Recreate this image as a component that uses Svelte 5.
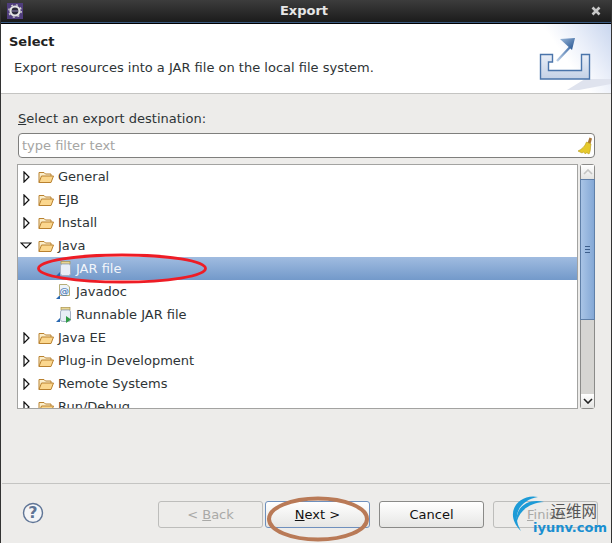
<script lang="ts">
  const nodes = [
    { label: "General", kind: "folder", arrow: "closed" },
    { label: "EJB", kind: "folder", arrow: "closed" },
    { label: "Install", kind: "folder", arrow: "closed" },
    { label: "Java", kind: "folder", arrow: "open" },
    { label: "JAR file", kind: "jar", selected: true },
    { label: "Javadoc", kind: "doc" },
    { label: "Runnable JAR file", kind: "run" },
    { label: "Java EE", kind: "folder", arrow: "closed" },
    { label: "Plug-in Development", kind: "folder", arrow: "closed" },
    { label: "Remote Systems", kind: "folder", arrow: "closed" },
    { label: "Run/Debug", kind: "folder", arrow: "closed" },
  ];
</script>

<div class="window">
  <div class="titlebar">
    <svg class="appicon" width="16" height="16" viewBox="0 0 16 16">
      <rect width="16" height="16" fill="#4f3d7c" />
      <circle cx="8" cy="8" r="4.5" fill="#2c2a3c" stroke="#e4e4e4" stroke-width="2.2" />
      <circle cx="8" cy="8" r="6.2" fill="none" stroke="#cfcfcf" stroke-width="1.4" stroke-dasharray="2 2.9" />
      <rect x="5" y="7.5" width="6" height="1" fill="#8a7fb0" />
    </svg>
    <span class="title">Export</span>
    <svg class="close" width="10" height="10" viewBox="0 0 10 10">
      <path d="M1.5 1.5 L8.5 8.5 M8.5 1.5 L1.5 8.5" stroke="#c8c8c8" stroke-width="2.6" />
    </svg>
  </div>

  <header class="banner">
    <div class="heading">
      <h1>Select</h1>
      <p>Export resources into a JAR file on the local file system.</p>
    </div>
    <div class="wizard">
      <svg width="72" height="69" viewBox="0 0 72 69">
        <defs>
          <linearGradient id="tray" x1="0" y1="0" x2="0" y2="1">
            <stop offset="0" stop-color="#e9eef7" />
            <stop offset="1" stop-color="#c4d1e6" />
          </linearGradient>
          <linearGradient id="shaft" x1="0" y1="1" x2="1" y2="0">
            <stop offset="0" stop-color="#bccfe6" />
            <stop offset="1" stop-color="#3a69a6" />
          </linearGradient>
          <linearGradient id="head" x1="0" y1="0" x2="1" y2="1">
            <stop offset="0" stop-color="#9db9da" />
            <stop offset="1" stop-color="#1f4f8e" />
          </linearGradient>
        </defs>
        <path d="M46 55 H72 V60 L40 66 H28 Z" fill="#dfe3ee" />
        <path d="M1.5 30.5 H13.5 V38 H9.5 V46.5 H42.5 V30.5 H50.5 V55 H1.5 Z" fill="url(#tray)" stroke="#4a74aa" stroke-width="1.4" />
        <path d="M18 37 L33 21" stroke="url(#shaft)" stroke-width="2.4" />
        <path d="M21 15 L36 14 L33 26 Z" fill="url(#head)" />
      </svg>
    </div>
  </header>

  <main class="body">
    <label class="prompt" for="filter"><u>S</u>elect an export destination:</label>
    <div class="filter">
      <input id="filter" placeholder="type filter text" />
      <svg width="16" height="18" viewBox="0 0 16 18">
        <path d="M10.5 6 L12.5 0.5 L15 1.5 L13.5 7 Z" fill="#a9773a" />
        <path d="M9.5 5 L14 7 L13.5 10 C13.5 13 13 15 12 17 L9.5 15.5 L8.5 17 L6.5 15 L5 16 L1 14 C4.5 12.5 8 9.5 9.5 5 Z" fill="#e6c92c" stroke="#b79a16" stroke-width="0.6" />
      </svg>
    </div>

    <div class="treewrap">
      <div class="tree">
        {#each nodes as node}
          <div class="row" class:selected={node.selected}>
            <span class="arrow">
              {#if node.arrow === "closed"}
                <svg width="7" height="12" viewBox="0 0 7 12"><path d="M1 1 L6 6 L1 11 Z" fill="#fff" stroke="#111" stroke-width="1.2" /></svg>
              {:else if node.arrow === "open"}
                <svg width="12" height="7" viewBox="0 0 12 7"><path d="M1 1 H11 L6 6 Z" fill="#fff" stroke="#111" stroke-width="1.2" /></svg>
              {/if}
            </span>
            {#if node.kind === "folder"}
              <svg class="icon" width="16" height="14" viewBox="0 0 16 14">
                <path d="M1 12.5 V2.5 H6 L7.5 4 H13 V6" fill="#fbeecb" stroke="#b9812f" />
                <path d="M1 12.5 L3.5 6 H15.5 L13 12.5 Z" fill="#fbd78e" stroke="#b9812f" />
              </svg>
            {:else if node.kind === "doc"}
              <svg class="icon sub" width="16" height="16" viewBox="0 0 16 16">
                <path d="M0 15 L4 15 L4 11 Z" fill="#2a68b0" />
                <path d="M3.5 0.5 H11 L13.5 3 V11.5 H3.5 Z" fill="#eef3f8" stroke="#b5ad78" />
                <text x="3.6" y="9.5" class="at">@</text>
              </svg>
            {:else}
              <svg class="icon sub" width="16" height="16" viewBox="0 0 16 16">
                <path d="M0 15 L4 15 L4 11 Z" fill="#2a68b0" />
                <rect x="5" y="0.5" width="9" height="2.5" fill="#e9d690" stroke="#a8924a" stroke-width="0.7" />
                <rect x="4.5" y="3" width="10" height="11.5" rx="2" fill="#e8eef6" stroke="#a5b1c4" />
                {#if node.kind === "run"}
                  <path d="M10 9 L15 12.5 L10 16 Z" fill="#2f9a45" />
                {/if}
              </svg>
            {/if}
            <span class="label">{node.label}</span>
          </div>
        {/each}
      </div>

      <div class="scrollbar">
        <div class="step">
          <svg width="10" height="6" viewBox="0 0 10 6"><path d="M1 5 L5 1 L9 5" fill="none" stroke="#c4c4c2" stroke-width="1.6" /></svg>
        </div>
        <div class="thumb"><i></i><i></i><i></i></div>
        <div class="rail"></div>
        <div class="step down">
          <svg width="10" height="6" viewBox="0 0 10 6"><path d="M1 1 L5 5 L9 1" fill="none" stroke="#222" stroke-width="1.6" /></svg>
        </div>
      </div>
    </div>
  </main>

  <footer class="actions">
    <button class="help" aria-label="Help">
      <svg width="22" height="22" viewBox="0 0 22 22">
        <circle cx="11" cy="11" r="9.5" fill="#f4f5f7" stroke="#5f7596" stroke-width="1.4" />
        <text x="11" y="16" text-anchor="middle" class="qmark">?</text>
      </svg>
    </button>
    <button disabled>&lt; <u>B</u>ack</button>
    <button class="default"><u>N</u>ext &gt;</button>
    <button class="cancel">Cancel</button>
    <button class="finish" disabled><u>F</u>inish</button>
  </footer>

  <svg class="marks" width="612" height="543" viewBox="0 0 612 543">
    <ellipse cx="122" cy="268.5" rx="83.5" ry="13.5" fill="none" stroke="#ee1c25" stroke-width="2.8" />
    <ellipse cx="318" cy="519" rx="49" ry="20.5" fill="none" stroke="#b97a57" stroke-width="4" />
    <path d="M538 497 C520 493 502 512 521 531 C511 515 520 500 538 497 Z" fill="#1d9bd7" />
    <path d="M544 502 C530 498 515 506 517 521 C520 510 530 503 544 502 Z" fill="#1d9bd7" />
  </svg>
  <div class="brand">
    <span class="cn">运维网</span>
    <span class="url">iyunv.com</span>
  </div>
</div>

<style>
  :global(body) {
    margin: 0;
  }

  .window {
    position: relative;
    width: 612px;
    height: 543px;
    display: flex;
    flex-direction: column;
    overflow: hidden;
    background: #edecea;
    font-family: "DejaVu Sans", sans-serif;
    font-size: 13px;
    color: #2e3436;
    box-sizing: border-box;
    border-left: 1px solid #333;
    border-right: 1px solid #333;
  }

  .titlebar {
    height: 24px;
    flex: none;
    margin: 0 -1px;
    display: flex;
    align-items: center;
    justify-content: space-between;
    padding: 0 11px 2px 7px;
    box-sizing: border-box;
    background: linear-gradient(#3c3c3c, #1a1a1a);
    border-bottom: 1px solid #000;
    box-shadow: inset 0 -1px 0 #3b5a80;
  }

  .title {
    color: #e6e6e6;
    font-weight: bold;
    margin-right: 6px;
  }

  .banner {
    height: 70px;
    flex: none;
    box-sizing: border-box;
    display: flex;
    justify-content: space-between;
    background: #fff;
    border-bottom: 1px solid #c4c4c2;
  }

  .heading {
    padding: 10px 0 0 8px;
  }

  h1 {
    margin: 0;
    font-size: 13px;
    line-height: 16px;
    color: #222;
  }

  .heading p {
    margin: 10px 0 0 5px;
    line-height: 16px;
  }

  .wizard {
    width: 72px;
    height: 69px;
    flex: none;
    background: linear-gradient(235deg, #c9d6ee 0%, #e9eef9 33%, #fff 58%);
  }

  .wizard svg {
    display: block;
  }

  .body {
    flex: 1;
    padding: 16px 16px 0 16px;
    display: flex;
    flex-direction: column;
  }

  .prompt {
    line-height: 18px;
    margin-left: 1px;
  }

  .filter {
    height: 25px;
    margin: 5px 0 0 1px;
    box-sizing: border-box;
    display: flex;
    align-items: center;
    padding: 0 1px 0 3px;
    background: #fff;
    border: 1px solid #7f7f7d;
    border-radius: 4px;
  }

  .filter input {
    flex: 1;
    min-width: 0;
    border: 0;
    outline: 0;
    padding: 0;
    font: inherit;
    background: none;
  }

  .filter input::placeholder {
    color: #a5a5a3;
    opacity: 1;
  }

  .treewrap {
    height: 245px;
    margin-top: 6px;
    display: flex;
    gap: 2px;
  }

  .tree {
    width: 562px;
    box-sizing: border-box;
    background: #fff;
    border: 1px solid #a3a3a1;
    overflow: hidden;
  }

  .row {
    height: 23px;
    display: flex;
    align-items: center;
    padding-left: 2px;
  }

  .row.selected {
    background: linear-gradient(#a0bce0, #7399ca);
    color: #f2f5fa;
  }

  .arrow {
    width: 12px;
    display: flex;
    justify-content: center;
    margin-right: 6px;
  }

  .icon {
    flex: none;
    margin-right: 4px;
  }

  .icon.sub {
    margin: 0 4px 0 18px;
  }

  .at {
    font-size: 9.5px;
    fill: #2a68b0;
    font-family: "DejaVu Sans", sans-serif;
  }

  .qmark {
    font-size: 16px;
    font-weight: bold;
    fill: #5f7596;
    font-family: "DejaVu Sans", sans-serif;
  }

  .scrollbar {
    width: 15px;
    display: flex;
    flex-direction: column;
    box-sizing: border-box;
    border: 1px solid #8b8b89;
    border-radius: 3px;
    background: #d6d5d2;
  }

  .step {
    height: 14px;
    flex: none;
    display: flex;
    align-items: center;
    justify-content: center;
    background: linear-gradient(#fff, #e4e4e2);
  }

  .thumb {
    height: 141px;
    flex: none;
    box-sizing: border-box;
    display: flex;
    flex-direction: column;
    align-items: center;
    justify-content: center;
    gap: 2px;
    background: linear-gradient(90deg, #a9c4e6, #84a8d6);
    border: 1px solid #5f7fa8;
    margin: 0 -1px;
  }

  .thumb i {
    width: 5px;
    height: 1px;
    background: #3d5f8c;
  }

  .rail {
    flex: 1;
  }

  .actions {
    height: 60px;
    flex: none;
    margin: 0 1px;
    box-sizing: border-box;
    border-top: 1px solid #c4c4c2;
    display: flex;
    align-items: flex-start;
    padding-top: 17px;
  }

  button {
    width: 105px;
    height: 27px;
    flex: none;
    padding: 0;
    font: inherit;
    color: #111;
    background: linear-gradient(#fff, #e6e6e4);
    border: 1px solid #8a8a88;
    border-radius: 3px;
  }

  button:disabled {
    color: #a9a9a7;
    background: #edecea;
    border-color: #bdbdbb;
  }

  .help {
    width: 22px;
    height: 22px;
    margin: 1px 114px 0 20px;
    background: none;
    border: 0;
    display: flex;
  }

  .default {
    margin-left: 2px;
    border-color: #6f90bd;
  }

  .cancel {
    margin-left: 9px;
  }

  .finish {
    margin-left: 9px;
  }

  .marks {
    position: absolute;
    left: -1px;
    top: 0;
    pointer-events: none;
  }

  .brand {
    position: absolute;
    left: 520px;
    top: 501px;
    width: 86px;
    display: flex;
    flex-direction: column;
    align-items: flex-end;
  }

  .cn {
    font-family: "Noto Sans CJK SC", sans-serif;
    font-size: 15.5px;
    line-height: 19px;
    color: #555;
    margin-right: 10px;
  }

  .url {
    font-family: "DejaVu Sans", sans-serif;
    font-weight: bold;
    font-size: 13px;
    line-height: 16px;
    color: #1a8fd1;
    white-space: nowrap;
  }
</style>
